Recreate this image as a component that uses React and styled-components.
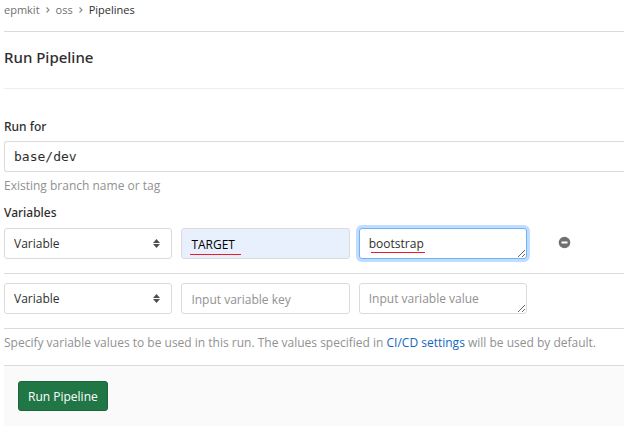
import React from "react";
import styled, { createGlobalStyle, css } from "styled-components";

const GlobalStyle = createGlobalStyle`
  *, *::before, *::after { box-sizing: border-box; }
  body {
    margin: 0;
    background: #fff;
    color: #2e2e2e;
    font: 12px/20px "Open Sans", "Noto Sans", sans-serif;
  }
  input, select, textarea, button { font: inherit; color: inherit; margin: 0; }
`;

const headingFont = css`
  font-family: "Noto Sans", "Open Sans", sans-serif;
  font-weight: 500;
  line-height: 20px;
`;

const Page = styled.main`
  padding-left: 4px;
`;

const Breadcrumbs = styled.nav`
  display: flex;
  align-items: center;
  gap: 5px;
  height: 32px;
  padding-bottom: 11px;
  border-bottom: 1px solid #dbdbdb;
  font-size: 11px;
`;

const Crumb = styled.a`
  color: ${(p) => (p.$current ? "#2e2e2e" : "#707070")};
  text-decoration: none;
`;

const Chevron = styled.svg`
  width: 6px;
  height: 8px;
  fill: none;
  stroke: #8c8c8c;
  stroke-width: 1.2;
`;

const Title = styled.h1`
  ${headingFont}
  margin: 0;
  padding: 15px 0 21px;
  border-bottom: 1px solid #eee;
  font-size: 15px;
`;

const Form = styled.form`
  display: flex;
  flex-direction: column;
  padding-top: 28px;
`;

const Label = styled.label`
  ${headingFont}
  padding-bottom: 4px;
`;

const fieldStyle = css`
  display: block;
  width: 100%;
  height: 31px;
  padding: 4px 9px;
  border: 1px solid #dbdbdb;
  border-radius: 3px;
  background: #fff;
  outline: none;
  &::placeholder { color: #919191; opacity: 1; }
`;

const RefInput = styled.input`
  ${fieldStyle}
  border-right: 0;
  border-radius: 3px 0 0 3px;
  font-family: "DejaVu Sans Mono", monospace;
  font-size: 13px;
`;

const Hint = styled.p`
  margin: 0;
  padding: 4px 0 7px;
  color: #919191;
`;

const Group = styled.fieldset`
  margin: 0;
  padding: 0;
  border: 0;
  min-width: 0;
`;

const Legend = styled.legend`
  ${headingFont}
  padding: 0 0 5px;
`;

const VariableRow = styled.div`
  display: grid;
  grid-template-columns: repeat(3, minmax(0, 23fr)) minmax(0, 12fr);
  gap: 9px;
  padding-bottom: 14px;
  border-bottom: 1px solid #dbdbdb;
  & + & { padding-top: 9px; }
`;

const Cell = styled.div`
  position: relative;
`;

const TypeSelect = styled.select`
  ${fieldStyle}
  appearance: none;
`;

const SortIcon = styled.svg`
  position: absolute;
  right: 12px;
  top: 11px;
  width: 7px;
  height: 9px;
  fill: #4f4f4f;
  pointer-events: none;
`;

const KeyInput = styled.input`
  ${fieldStyle}
  padding-top: 6px;
  ${(p) => p.$filled && css`background: #e8f0fe; color: #000;`}
`;

const ValueInput = styled.textarea`
  ${fieldStyle}
  padding-top: 5px;
  line-height: 20px;
  overflow: hidden;
  resize: vertical;
  ${(p) => p.$active && css`
    border-color: #73afff;
    box-shadow: 0 0 0 3px #bfdeff;
  `}
`;

const Underline = styled.span`
  position: absolute;
  left: ${(p) => p.$left}px;
  bottom: ${(p) => p.$bottom}px;
  width: ${(p) => p.$width}px;
  height: 1px;
  background: #ed1c24;
`;

const RemoveButton = styled.button`
  display: flex;
  align-self: start;
  justify-self: start;
  padding: 8px 22px;
  border: 0;
  background: none;
  svg { display: block; width: 13px; height: 13px; }
`;

const Help = styled.p`
  margin: 0;
  padding: 4px 0 12px;
  color: #919191;
`;

const Link = styled.a`
  color: #1068bf;
  text-decoration: none;
`;

const Actions = styled.footer`
  padding: 15px 14px;
  border-top: 1px solid #dbdbdb;
  background: #fafafa;
`;

const SubmitButton = styled.button`
  display: block;
  height: 30px;
  padding: 1px 9px 0;
  border: 1px solid #1b653b;
  border-radius: 3px;
  background: #217645;
  color: #fff;
`;

const Separator = () => (
  <Chevron viewBox="0 0 6 8" aria-hidden="true">
    <path d="M1.5 1.5l2.5 2.5-2.5 2.5" />
  </Chevron>
);

function Variable({ name, value, active, keyLine, valueLine }) {
  return (
    <VariableRow>
      <Cell>
        <TypeSelect aria-label="Variable type" defaultValue="variable">
          <option value="variable">Variable</option>
          <option value="file">File</option>
        </TypeSelect>
        <SortIcon viewBox="0 0 7 9" aria-hidden="true">
          <path d="M3.5 0L7 4H0zM0 5h7L3.5 9z" />
        </SortIcon>
      </Cell>
      <Cell>
        <KeyInput
          type="text"
          aria-label="Variable key"
          placeholder="Input variable key"
          defaultValue={name}
          $filled={Boolean(name)}
        />
        {keyLine && <Underline $left={9} $bottom={4} $width={keyLine} />}
      </Cell>
      <Cell>
        <ValueInput
          rows={1}
          aria-label="Variable value"
          placeholder="Input variable value"
          defaultValue={value}
          spellCheck={false}
          $active={active}
        />
        {valueLine && <Underline $left={12} $bottom={6} $width={valueLine} />}
      </Cell>
      {name && (
        <RemoveButton type="button" aria-label="Remove variable">
          <svg viewBox="0 0 13 13" aria-hidden="true">
            <circle cx="6.5" cy="6.5" r="5.8" fill="#707070" />
            <path d="M3.5 6.5h6" stroke="#fff" strokeWidth="2" />
          </svg>
        </RemoveButton>
      )}
    </VariableRow>
  );
}

export default function App() {
  return (
    <>
      <GlobalStyle />
      <Page>
        <Breadcrumbs aria-label="Breadcrumbs">
          <Crumb href="#epmkit">epmkit</Crumb>
          <Separator />
          <Crumb href="#oss">oss</Crumb>
          <Separator />
          <Crumb href="#pipelines" $current>Pipelines</Crumb>
        </Breadcrumbs>
        <Title>Run Pipeline</Title>
        <Form onSubmit={(e) => e.preventDefault()}>
          <Label htmlFor="ref">Run for</Label>
          <RefInput id="ref" type="text" defaultValue="base/dev" />
          <Hint>Existing branch name or tag</Hint>
          <Group>
            <Legend>Variables</Legend>
            <Variable name="TARGET" value="bootstrap" active keyLine={51} valueLine={54} />
            <Variable />
          </Group>
          <Help>
            Specify variable values to be used in this run. The values specified in{" "}
            <Link href="#settings">CI/CD settings</Link> will be used by default.
          </Help>
          <Actions>
            <SubmitButton type="submit">Run Pipeline</SubmitButton>
          </Actions>
        </Form>
      </Page>
    </>
  );
}
